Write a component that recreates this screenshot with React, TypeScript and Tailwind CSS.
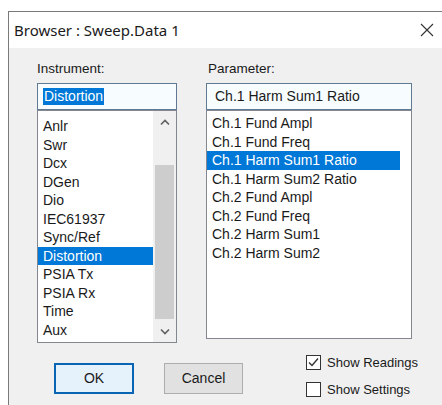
import React from 'react';

const instruments = ['Anlr', 'Swr', 'Dcx', 'DGen', 'Dio', 'IEC61937', 'Sync/Ref', 'Distortion', 'PSIA Tx', 'PSIA Rx', 'Time', 'Aux'];
const parameters = [
  'Ch.1 Fund Ampl',
  'Ch.1 Fund Freq',
  'Ch.1 Harm Sum1 Ratio',
  'Ch.1 Harm Sum2 Ratio',
  'Ch.2 Fund Ampl',
  'Ch.2 Fund Freq',
  'Ch.2 Harm Sum1',
  'Ch.2 Harm Sum2',
];

const Chevron: React.FC<{ up?: boolean }> = ({ up }) => (
  <svg width="10" height="7" viewBox="0 0 10 7">
    <path
      d={up ? 'M1 5.5 L5 1.5 L9 5.5' : 'M1 1.5 L5 5.5 L9 1.5'}
      fill="none"
      stroke="#606060"
      strokeWidth="1.6"
    />
  </svg>
);

const Checkbox: React.FC<{ checked?: boolean; label: string }> = ({ checked, label }) => (
  <div className="flex items-center h-[17px] gap-[6px]">
    <div className="w-[15px] h-[15px] border border-[#333333] bg-white flex items-center justify-center">
      {checked && (
        <svg width="13" height="13" viewBox="0 0 13 13">
          <path d="M2 6.5 L5 9.5 L11 2.5" fill="none" stroke="#333333" strokeWidth="1.4" />
        </svg>
      )}
    </div>
    <span className="text-[13px] text-[#1a1a1a]">{label}</span>
  </div>
);

export default function App() {
  const selectedInstrument = 'Distortion';
  const selectedParameter = 'Ch.1 Harm Sum1 Ratio';

  return (
    <div className="w-[442px] h-[405px] bg-white pl-[8px] pt-[11px] overflow-hidden font-['Liberation_Sans',Arial,sans-serif] text-black">
      <div className="h-full border-l border-t border-[#7a7a7a] flex flex-col">
        {/* title bar */}
        <div className="h-[36px] bg-white flex items-center justify-between pl-[5px] pr-[8px] shrink-0">
          <span className="font-['Noto_Sans',sans-serif] text-[15px] text-[#1a1a1a]">Browser : Sweep.Data 1</span>
          <svg width="14" height="14" viewBox="0 0 14 14" className="mb-[1px]">
            <path d="M1 1 L13 13 M13 1 L1 13" stroke="#333333" strokeWidth="1.1" />
          </svg>
        </div>

        <div className="flex-1 bg-[#f0f0f0] pl-[28px] pt-[13px]">
          <div className="flex gap-[29px]">
            {/* instrument column */}
            <div className="w-[140px] flex flex-col">
              <div className="text-[13.5px] leading-[16px] h-[16px] text-[#1a1a1a]">Instrument:</div>
              <div className="mt-[6px] h-[27px] border border-[#5f7a92] bg-[#f7fdff] flex items-center pl-[5px]">
                <span className="bg-[#0078d7] text-white text-[14px] leading-[17px] px-[1px]">{selectedInstrument}</span>
              </div>
              <div className="h-[233px] border border-[#828790] bg-white flex">
                <div className="flex-1 pt-[6px]">
                  {instruments.map((name) => (
                    <div
                      key={name}
                      className={
                        name === selectedInstrument
                          ? 'h-[18.5px] leading-[18.5px] text-[14px] pl-[5px] bg-[#0078d7] text-white'
                          : 'h-[18.5px] leading-[18.5px] text-[14px] pl-[5px] text-[#1a1a1a]'
                      }
                    >
                      {name}
                    </div>
                  ))}
                </div>
                {/* vertical scrollbar */}
                <div className="w-[23px] bg-[#f0f0f0] flex flex-col items-center">
                  <div className="h-[23px] flex items-center justify-center">
                    <Chevron up />
                  </div>
                  <div className="flex-1 w-full flex flex-col justify-end px-[2px] pb-[1px]">
                    <div className="h-[154px] bg-[#cdcdcd]" />
                  </div>
                  <div className="h-[22px] flex items-center justify-center">
                    <Chevron />
                  </div>
                </div>
              </div>
            </div>

            {/* parameter column */}
            <div className="w-[206px] flex flex-col">
              <div className="text-[13.5px] leading-[16px] h-[16px] text-[#1a1a1a] pl-[2px]">Parameter:</div>
              <div className="mt-[6px] h-[27px] border border-[#5f7a92] bg-[#f7fdff] flex items-center pl-[8px]">
                <span className="text-[14px] text-[#1a1a1a]">{selectedParameter}</span>
              </div>
              <div className="h-[229px] border border-[#828790] bg-white pt-[3px] pr-[11px]">
                {parameters.map((name) => (
                  <div
                    key={name}
                    className={
                      name === selectedParameter
                        ? 'h-[18.5px] leading-[18.5px] text-[14px] pl-[5px] bg-[#0078d7] text-white'
                        : 'h-[18.5px] leading-[18.5px] text-[14px] pl-[5px] text-[#1a1a1a]'
                    }
                  >
                    {name}
                  </div>
                ))}
              </div>
            </div>
          </div>

          {/* buttons and options */}
          <div className="flex items-start mt-[11px]">
            <div className="flex gap-[30px] ml-[17px] mt-[9px]">
              <button className="w-[80px] h-[31px] border-2 border-[#0a64b4] bg-[#e5f1fb] text-[14px] text-[#1a1a1a]">
                OK
              </button>
              <button className="w-[79px] h-[31px] border border-[#adadad] bg-[#e1e1e1] text-[14px] text-[#1a1a1a]">
                Cancel
              </button>
            </div>
            <div className="ml-[63px] flex flex-col gap-[10px]">
              <Checkbox checked label="Show Readings" />
              <Checkbox label="Show Settings" />
            </div>
          </div>
        </div>
      </div>
    </div>
  );
}
